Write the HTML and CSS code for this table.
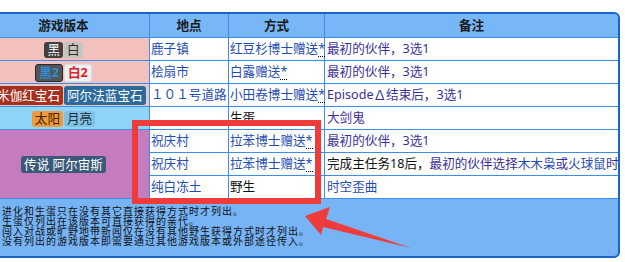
FILE: index.html
```html
<!DOCTYPE html>
<html lang="zh-CN">
<head>
<meta charset="utf-8">
<title>获得方式</title>
<link rel="stylesheet" href="styles.css">
</head>
<body>
<div class="page">
  <div class="wrap">
    <table class="dex">
      <colgroup><col class="c1"><col class="c2"><col class="c3"><col class="c4"></colgroup>
      <thead>
        <tr><th>游戏版本</th><th>地点</th><th>方式</th><th>备注</th></tr>
      </thead>
      <tbody>
        <tr>
          <td class="ver pink"><span class="b bk">黑</span><span class="b wh">白</span></td>
          <td><a class="lk">鹿子镇</a></td>
          <td><a class="lk">红豆杉博士赠送</a><span class="ast">*</span></td>
          <td class="note"><a class="vis">最初的伙伴，3选1</a></td>
        </tr>
        <tr>
          <td class="ver pink"><span class="b bk2">黑2</span><span class="b wh2">白2</span></td>
          <td><a class="lk">桧扇市</a></td>
          <td><a class="lk">白露赠送</a><span class="ast">*</span></td>
          <td class="note"><a class="vis">最初的伙伴，3选1</a></td>
        </tr>
        <tr>
          <td class="ver gem"><span class="b ruby">欧米伽红宝石</span><span class="b sapph">阿尔法蓝宝石</span></td>
          <td><a class="lk">１０１号道路</a></td>
          <td><a class="lk">小田卷博士赠送</a><span class="ast">*</span></td>
          <td class="note"><a class="vis">Episode∆结束后，3选1</a></td>
        </tr>
        <tr>
          <td class="ver sky"><span class="b sun">太阳</span><span class="b moon">月亮</span></td>
          <td></td>
          <td>生蛋</td>
          <td class="note"><a class="vis">大剑鬼</a></td>
        </tr>
        <tr>
          <td class="ver legend" rowspan="3"><span class="b arc">传说 阿尔宙斯</span></td>
          <td><a class="lk">祝庆村</a></td>
          <td><a class="lk">拉苯博士赠送</a><span class="ast">*</span></td>
          <td class="note"><a class="vis">最初的伙伴，3选1</a></td>
        </tr>
        <tr>
          <td><a class="lk">祝庆村</a></td>
          <td><a class="lk">拉苯博士赠送</a><span class="ast">*</span></td>
          <td class="note">完成主任务18后，<a class="vis">最初的伙伴</a><a class="vis">选择</a><a class="lk">木木枭</a><a class="vis">或</a><a class="lk">火球鼠</a><a class="vis">时</a></td>
        </tr>
        <tr>
          <td><a class="lk">纯白冻土</a></td>
          <td>野生</td>
          <td class="note"><a class="lk">时空歪曲</a></td>
        </tr>
      </tbody>
    </table>
    <div class="notes">
      <p>进化和生蛋只在没有其它直接获得方式时才列出。</p>
      <p>生蛋仅列出在该版本可直接获得的亲代。</p>
      <p>闯入对战或旷野地带新闻仅在没有其他野生获得方式时才列出。</p>
      <p>没有列出的游戏版本即需要通过其他游戏版本或外部途径传入。</p>
    </div>
  </div>
  <svg class="mark" width="625" height="262" viewBox="0 0 625 262" aria-hidden="true">
    <rect x="135" y="123" width="183" height="78" fill="none" stroke="#f03b3b" stroke-width="6"/>
    <polygon points="305,216 330,207 326,219 411,248 323,227 321,235" fill="#f03b3b"/>
  </svg>
</div>
</body>
</html>
```

FILE: styles.css
```css
html, body {
  margin: 0;
  padding: 0;
  background: #ffffff;
}

body {
  font-family: "Noto Sans", "Noto Sans CJK SC", sans-serif;
  font-size: 12.6px;
  color: #111;
  overflow: hidden;
}

.page {
  position: relative;
  width: 625px;
  height: 262px;
  overflow: hidden;
}

.wrap {
  margin: 12px 0 0 -25px;
  width: 641px;
  border: 2px solid #1766c8;
  border-radius: 6px;
  background: #76b4f6;
  overflow: hidden;
}

.dex {
  border-collapse: collapse;
  table-layout: fixed;
  width: 641px;
}

.c1 { width: 172px; }
.c2 { width: 79px; }
.c3 { width: 96px; }
.c4 { width: 294px; }

.dex th {
  height: 23px;
  padding: 0;
  background: #77b6f7;
  border: 1px solid #3d8ee9;
  border-top: 0;
  font-weight: bold;
  color: #1a1a1a;
  text-align: center;
  line-height: 20px;
}

.dex td {
  height: 22px;
  padding: 0 1px;
  background: #ffffff;
  border: 1px solid #3d8ee9;
  white-space: nowrap;
  line-height: 20px;
  text-align: left;
  overflow: visible;
}

.dex td.note {
  overflow: hidden;
  padding-left: 2px;
}

.dex td.ver {
  text-align: center;
  padding: 0;
}

.pink { background: #f2c1bd !important; }
.gem { background: #e3c8cc !important; }
.sky { background: #8ed5f8 !important; }
.legend { background: #c57cbf !important; }

.lk { color: #1f4db2; }
.vis { color: #3a2f98; }

.ast {
  color: #1f4db2;
  display: inline-block;
  line-height: 14px;
  border-bottom: 1px dotted #000;
}

.b {
  display: inline-block;
  padding: 0 3px;
  border-radius: 3px;
  line-height: 16px;
  vertical-align: middle;
  margin-left: 1px;
}
.b:first-child { margin-left: 0; }

.bk { background: #404040; color: #ffffff; }
.wh { background: #c4c4c4; color: #3a2a10; }
.bk2 {
  background: #555555;
  color: #2b90d8;
  font-weight: bold;
  border: 1px solid #2a2a2a;
  padding: 0 3px;
}
.wh2 {
  background: #efefef;
  color: #e0202a;
  font-weight: bold;
  border: 1px solid #dedede;
}
.ruby { background: #a5301d; color: #ffffff; line-height: 19px; }
.sapph { background: #2c6a9c; color: #ffffff; line-height: 19px; }
.sun { background: #f09a3b; color: #3a2200; }
.moon { background: #7fc2e6; color: #1d2a33; }
.arc { background: #3a5877; color: #ffffff; line-height: 17px; }

.notes {
  padding: 7px 0 10px 25px;
  font-family: "Noto Sans CJK SC", sans-serif;
  font-size: 10px;
  letter-spacing: 1px;
  line-height: 10px;
  color: #111;
}

.notes p {
  margin: 0;
  white-space: nowrap;
}

.mark {
  position: absolute;
  left: 0;
  top: 0;
  pointer-events: none;
}
```
